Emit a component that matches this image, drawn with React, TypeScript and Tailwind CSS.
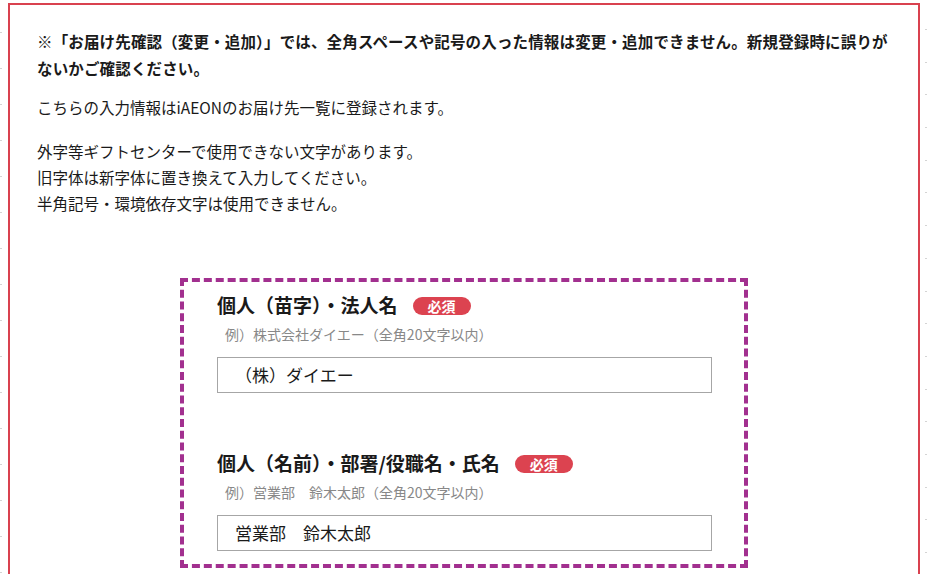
import React from "react";

const font = { fontFamily: '"Noto Sans CJK JP", "Noto Sans", sans-serif' };

function Ticks({ count, className }: { count: number; className: string }) {
  return (
    <div className={className}>
      {Array.from({ length: count }).map((_, i) => (
        <div key={i} className="h-px w-[2px] bg-[#d4d4d4]" />
      ))}
    </div>
  );
}

function Field({
  label,
  example,
  value,
}: {
  label: string;
  example: string;
  value: string;
}) {
  return (
    <div className="flex flex-col">
      <div className="flex items-center">
        <span className="text-[19px] leading-[27px] font-bold text-[#1a1a1a]">{label}</span>
        <span className="ml-[15px] mt-[3px] flex h-[18px] w-[58px] items-center justify-center rounded-full bg-[#dc4350] text-[14px] font-bold leading-none text-white">
          必須
        </span>
      </div>
      <div className="mt-[6px] pl-2 text-[14px] leading-[20px] text-[#888888]">{example}</div>
      <div className="mt-[13px] flex h-[36px] w-[495px] items-center border border-[#a6a6a6] pl-[17px] text-[17px] text-[#1a1a1a]">
        {value}
      </div>
    </div>
  );
}

export default function App() {
  return (
    <div className="flex min-h-[574px] w-[928px] bg-white pt-[3px]" style={font}>
      <Ticks count={16} className="flex w-[8px] flex-col gap-[35px] pt-[29px]" />
      <div className="flex h-[640px] w-[912px] flex-col border-2 border-[#d9414f] pl-[27px] pr-[15px] pt-[23px] text-[#1a1a1a]">
        <p className="text-[15.5px] leading-[27px] font-bold tracking-[0.15px]">
          ※「お届け先確認（変更・追加）」では、全角スペースや記号の入った情報は変更・追加できません。新規登録時に誤りが
          <br />
          ないかご確認ください。
        </p>
        <p className="mt-[12px] text-[15.5px] leading-[26px]">
          こちらの入力情報はiAEONのお届け先一覧に登録されます。
        </p>
        <p className="mt-[18px] text-[15.5px] leading-[26px]">
          外字等ギフトセンターで使用できない文字があります。
          <br />
          旧字体は新字体に置き換えて入力してください。
          <br />
          半角記号・環境依存文字は使用できません。
        </p>
        <div className="mt-[62px] flex justify-center pr-[12px]">
          <div className="flex w-[568px] flex-col gap-[56px] border-4 border-dashed border-[#a2308f] pb-[13px] pl-[33px] pt-[9px]">
            <Field
              label="個人（苗字）・法人名"
              example="例）株式会社ダイエー（全角20文字以内）"
              value="（株）ダイエー"
            />
            <Field
              label="個人（名前）・部署/役職名・氏名"
              example="例）営業部　鈴木太郎（全角20文字以内）"
              value="営業部　鈴木太郎"
            />
          </div>
        </div>
      </div>
      <Ticks count={18} className="flex w-[8px] flex-col items-end gap-[31.7px] pt-[26px] pr-[1px]" />
    </div>
  );
}
